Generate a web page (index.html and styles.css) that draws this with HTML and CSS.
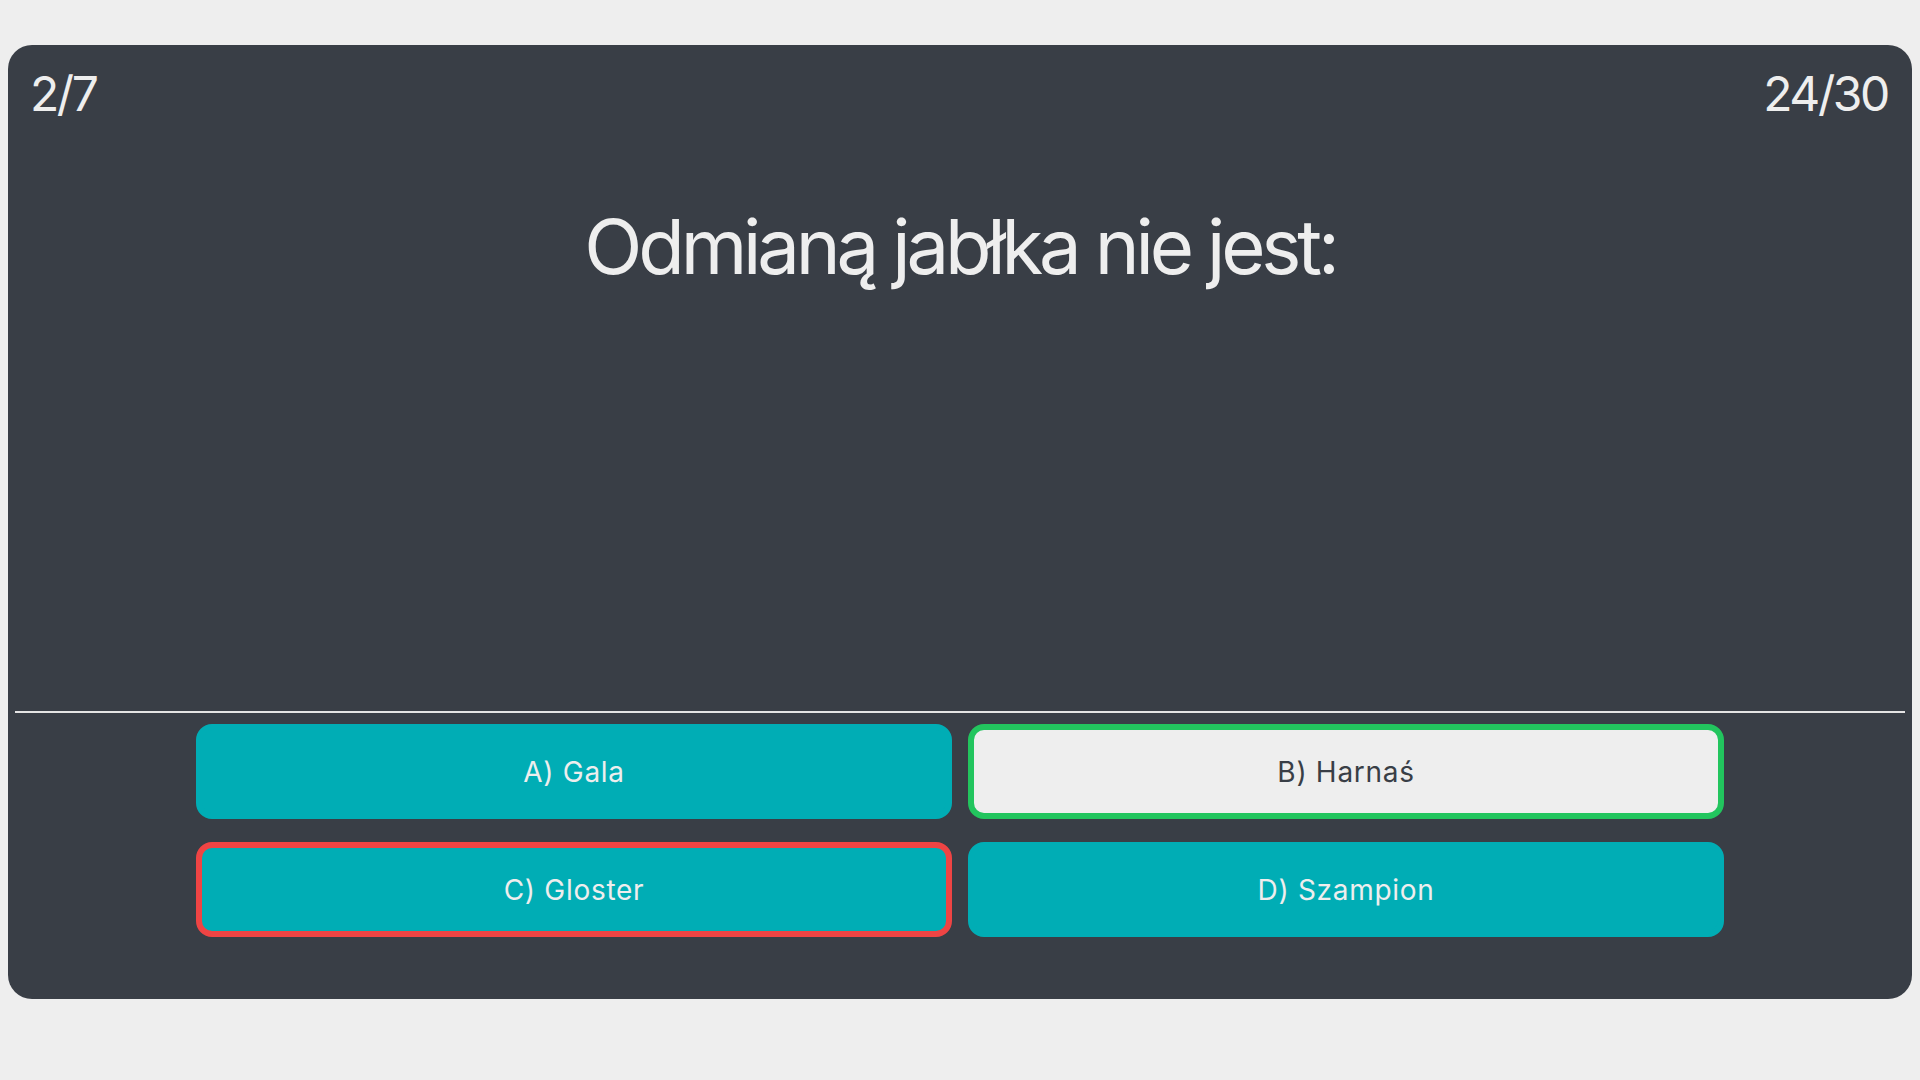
FILE: index.html
```html
<!DOCTYPE html>
<html lang="pl">
<head>
<meta charset="utf-8">
<title>Quiz</title>
<link rel="stylesheet" href="styles.css">
</head>
<body>
<main class="card">
  <header class="top">
    <span class="counter">2/7</span>
    <span class="counter">24/30</span>
  </header>
  <h1 class="question">Odmianą jabłka nie jest:</h1>
  <hr class="divider">
  <div class="answers">
    <button class="answer">A) Gala</button>
    <button class="answer answer--correct">B) Harnaś</button>
    <button class="answer answer--wrong">C) Gloster</button>
    <button class="answer">D) Szampion</button>
  </div>
</main>
</body>
</html>
```
FILE: styles.css
```css
html, body {
  margin: 0;
  padding: 0;
}
body {
  background: #eeeeee;
  font-family: Inter, "Noto Sans", sans-serif;
  padding: 45px 8px 0 8px;
}
.card {
  box-sizing: border-box;
  height: 954px;
  background: #393e46;
  border-radius: 24px;
  padding: 20px 0 62px 0;
  display: flex;
  flex-direction: column;
  color: #eeeeee;
}
.top {
  display: flex;
  justify-content: space-between;
  padding: 0 24px 0 22px;
}
.counter {
  font-size: 48px;
  line-height: 58px;
  letter-spacing: -0.05em;
}
.question {
  margin: 77px 0 0 0;
  text-align: center;
  font-weight: 400;
  font-size: 76px;
  line-height: 92px;
  letter-spacing: -0.055em;
}
.divider {
  margin: auto 7px 0 7px;
  border: 0;
  height: 2px;
  background: #e4e4e4;
}
.answers {
  margin: 11px auto 0 auto;
  width: 1528px;
  display: grid;
  grid-template-columns: 1fr 1fr;
  column-gap: 16px;
  row-gap: 23px;
}
.answer {
  box-sizing: border-box;
  height: 95px;
  border: 6px solid #00adb5;
  border-radius: 16px;
  background: #00adb5;
  color: #eeeeee;
  font-family: Inter, "Noto Sans", sans-serif;
  font-size: 28px;
  letter-spacing: 0.025em;
  display: flex;
  align-items: center;
  justify-content: center;
  padding: 0;
}
.answer--correct {
  background: #eeeeee;
  color: #393e46;
  border-color: #22c55e;
}
.answer--wrong {
  border-color: #ef4444;
}
```
